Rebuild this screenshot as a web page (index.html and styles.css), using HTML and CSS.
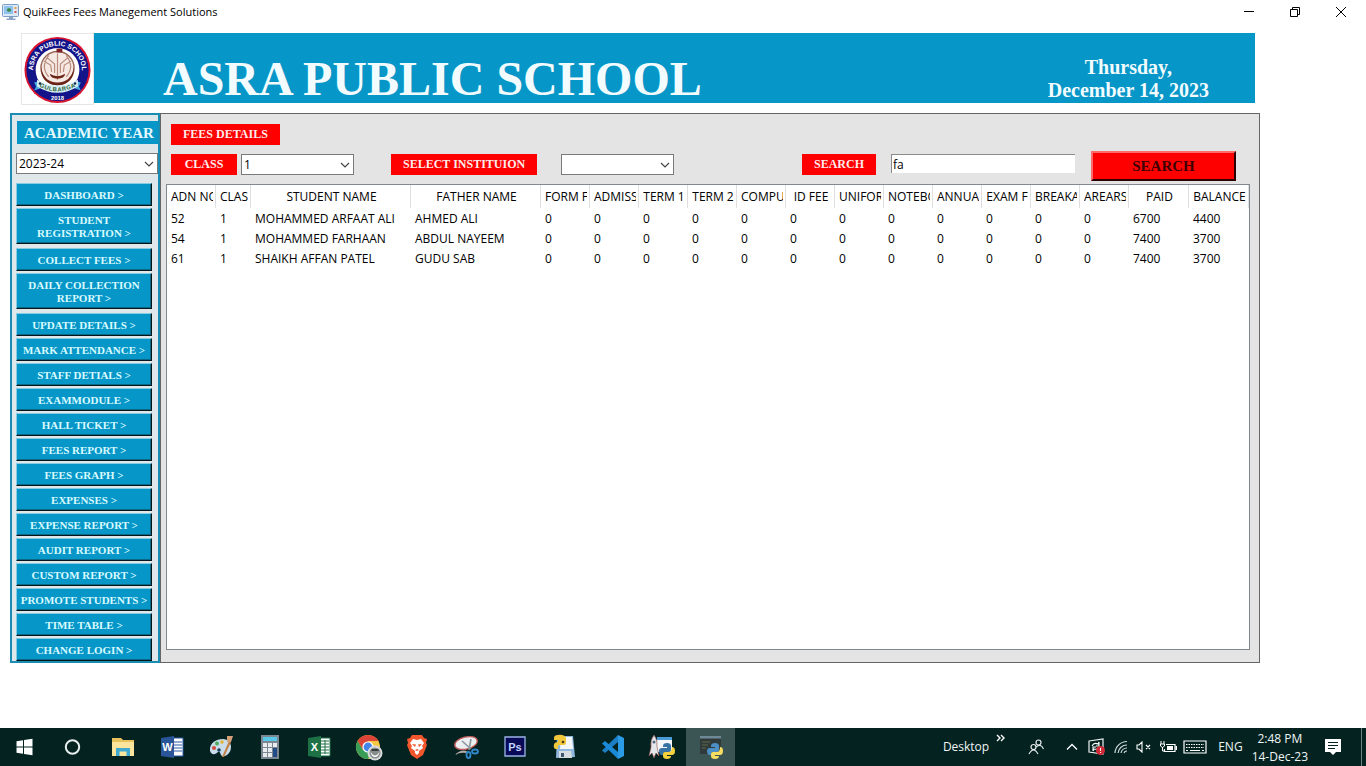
FILE: index.html
```html
<!DOCTYPE html>
<html lang="en">
<head>
<meta charset="utf-8">
<title>QuikFees Fees Manegement Solutions</title>
<link rel="stylesheet" href="styles.css">
</head>
<body>
<header class="titlebar">
  <svg class="app-icon" width="18" height="16" viewBox="0 0 18 16"><rect x=".5" y=".5" width="16" height="12" rx="1" fill="#dceaf8" stroke="#7b9cc4"/><rect x="2" y="2" width="9" height="8" fill="#8fc3ee"/><path d="M5 5l2-1 2 1v2l-2 1-2-1z" fill="#3f8b4c"/><path d="M12.500 3h2v2h-2z" fill="#e99a3c"/><path d="M12.500 7h2v2h-2z" fill="#d9534f"/><path d="M7 13h4v1.500H7zM4.500 14.500h9V16h-9z" fill="#8aa5c8"/></svg>
  <span class="title">QuikFees Fees Manegement Solutions</span>
  <div class="window-controls">
    <button aria-label="Minimize"><svg width="12" height="12" viewBox="0 0 12 12"><path d="M1 5.500h10" stroke="#000"/></svg></button>
    <button aria-label="Restore"><svg width="12" height="12" viewBox="0 0 12 12" fill="none" stroke="#000"><path d="M1.500 3.500h7v7h-7z"/><path d="M3.500 3.500v-2h7v7h-2"/></svg></button>
    <button aria-label="Close"><svg width="12" height="12" viewBox="0 0 12 12"><path d="M1 1l10 10M11 1L1 11" stroke="#000"/></svg></button>
  </div>
</header>

<div class="school">
  <svg class="crest" viewBox="0 0 72 72" role="img" aria-label="School crest">
    <defs>
      <path id="arc-name" d="M11.500 42A25 25 0 1 1 60.500 42"/>
      <path id="arc-city" d="M17 48Q36 60 55 48"/>
    </defs>
    <circle cx="36" cy="37" r="34" fill="#d9142f"/>
    <circle cx="36" cy="37" r="32" fill="#14148a"/>
    <circle cx="36" cy="37" r="22.500" fill="#fff"/>
    <circle cx="36" cy="35" r="17" fill="#f6e9e3" stroke="#9b6a5c" stroke-width="1.500"/>
    <path d="M36 20v27M27 22q-9 12 0 22M45 22q9 12 0 22M22 28l7 4 1 7M50 28l-7 4-1 7M25 24l8 7v9M47 24l-8 7v9" fill="none" stroke="#b98c7e" stroke-width="1.200"/>
    <path d="M19 34q3 16 17 16t17-16q0 18-17 19-17-1-17-19z" fill="#6b2418"/>
    <path d="M28 41q8 5 16 0-1 5-8 5t-8-5z" fill="#6b2418"/>
    <path d="M35 15h6v4h-6z" fill="#7d1f24"/>
    <path d="M12 50l6-2v8l-6 2 2-4zM60 50l-6-2v8l6 2-2-4z" fill="#4aa9dd"/>
    <path d="M15 47Q36 59 57 47v7Q36 67 15 54z" fill="#d6f0f5"/>
    <circle cx="18" cy="51" r="1.300" fill="#124"/><circle cx="54" cy="51" r="1.300" fill="#124"/>
    <text class="crest-name"><textPath href="#arc-name" startOffset="50%" text-anchor="middle">ASRA PUBLIC SCHOOL</textPath></text>
    <text class="crest-city" dy="5"><textPath href="#arc-city" startOffset="50%" text-anchor="middle">GULBARGA</textPath></text>
    <text class="crest-year" x="36" y="67.500" text-anchor="middle">2018</text>
  </svg>
  <div class="banner">
    <h1>ASRA PUBLIC SCHOOL</h1>
    <p class="date">Thursday,<br>December 14, 2023</p>
  </div>
</div>

<div class="workspace">
  <nav class="sidebar">
    <label class="year-label" for="year">ACADEMIC YEAR</label>
    <div class="combo year-combo"><select id="year"><option>2023-24</option></select><svg class="chevron" viewBox="0 0 10 6"><path d="M1 1l4 4 4-4"/></svg></div>
    <div class="menu">
      <button>DASHBOARD &gt;</button>
      <button class="tall">STUDENT<br>REGISTRATION &gt;</button>
      <button>COLLECT FEES &gt;</button>
      <button class="tall">DAILY COLLECTION<br>REPORT &gt;</button>
      <button>UPDATE DETAILS &gt;</button>
      <button>MARK ATTENDANCE &gt;</button>
      <button>STAFF DETIALS &gt;</button>
      <button>EXAMMODULE &gt;</button>
      <button>HALL TICKET &gt;</button>
      <button>FEES REPORT &gt;</button>
      <button>FEES GRAPH &gt;</button>
      <button>EXPENSES &gt;</button>
      <button>EXPENSE REPORT &gt;</button>
      <button>AUDIT REPORT &gt;</button>
      <button>CUSTOM REPORT &gt;</button>
      <button>PROMOTE STUDENTS &gt;</button>
      <button>TIME TABLE &gt;</button>
      <button>CHANGE LOGIN &gt;</button>
    </div>
  </nav>

  <main class="panel">
    <h2 class="tag">FEES DETAILS</h2>
    <form class="filters">
      <div class="field class-field"><label class="tag" for="class">CLASS</label>
        <div class="combo"><select id="class"><option>1</option></select><svg class="chevron" viewBox="0 0 10 6"><path d="M1 1l4 4 4-4"/></svg></div></div>
      <div class="field institution-field"><label class="tag" for="institution">SELECT INSTITUION</label>
        <div class="combo"><select id="institution"><option></option></select><svg class="chevron" viewBox="0 0 10 6"><path d="M1 1l4 4 4-4"/></svg></div></div>
      <div class="field search-field"><label class="tag" for="query">SEARCH</label>
        <input id="query" type="text" value="fa"></div>
      <button class="search" type="button">SEARCH</button>
    </form>
    <div class="grid">
      <table>
        <colgroup><col class="w49"><col class="w35"><col class="w160"><col class="w130"><col class="w49" span="12"><col class="w60" span="2"></colgroup>
        <thead><tr><th><span>ADN NO</span></th><th><span>CLAS</span></th><th><span>STUDENT NAME</span></th><th><span>FATHER NAME</span></th><th><span>FORM F</span></th><th><span>ADMISS</span></th><th><span>TERM 1</span></th><th><span>TERM 2</span></th><th><span>COMPU</span></th><th><span>ID FEE</span></th><th><span>UNIFOR</span></th><th><span>NOTEBO</span></th><th><span>ANNUA</span></th><th><span>EXAM F</span></th><th><span>BREAKA</span></th><th><span>AREARS</span></th><th><span>PAID</span></th><th><span>BALANCE</span></th></tr></thead>
        <tbody>
          <tr><td>52</td><td>1</td><td>MOHAMMED ARFAAT ALI</td><td>AHMED ALI</td><td>0</td><td>0</td><td>0</td><td>0</td><td>0</td><td>0</td><td>0</td><td>0</td><td>0</td><td>0</td><td>0</td><td>0</td><td>6700</td><td>4400</td></tr>
          <tr><td>54</td><td>1</td><td>MOHAMMED FARHAAN</td><td>ABDUL NAYEEM</td><td>0</td><td>0</td><td>0</td><td>0</td><td>0</td><td>0</td><td>0</td><td>0</td><td>0</td><td>0</td><td>0</td><td>0</td><td>7400</td><td>3700</td></tr>
          <tr><td>61</td><td>1</td><td>SHAIKH AFFAN PATEL</td><td>GUDU SAB</td><td>0</td><td>0</td><td>0</td><td>0</td><td>0</td><td>0</td><td>0</td><td>0</td><td>0</td><td>0</td><td>0</td><td>0</td><td>7400</td><td>3700</td></tr>
        </tbody>
      </table>
    </div>
  </main>
</div>

<footer class="taskbar">
  <div class="apps">
    <button aria-label="Start"><svg viewBox="0 0 24 24"><path d="M3.500 6.200l6.500-1v6.300H3.500zM11 5l8.500-1.200v7.700H11zM3.500 12.500H10v6.300l-6.500-1zM11 12.500h8.500v7.700L11 19z" fill="#fff"/></svg></button>
    <button aria-label="Cortana"><svg viewBox="0 0 24 24"><circle cx="10.500" cy="12" r="6.700" fill="none" stroke="#e8eeee" stroke-width="2"/></svg></button>
    <button aria-label="File Explorer"><svg viewBox="0 0 24 24"><path d="M1 3h9l2 2h11v16H1z" fill="#e8c25a"/><path d="M1 7h22v14H1z" fill="#fbe49c"/><path d="M5 21v-8h14v8h-3.500v-4.500h-7V21z" fill="#3fa9d0"/></svg></button>
    <button aria-label="Word"><svg viewBox="0 0 24 24"><path d="M12 3h11v18H12z" fill="#fff" stroke="#2b5aa8"/><path d="M14 7h8M14 10h8M14 13h8M14 16h8" stroke="#2b5aa8"/><path d="M1 3l13-2v22L1 21z" fill="#2a5699"/><text x="7.500" y="16" class="glyph">W</text></svg></button>
    <button aria-label="Paint"><svg viewBox="0 0 24 24"><path d="M1 16C0 8 7 4 14 4c8 0 10 9 6 14-3 4-7 4-8 2s-1-4-3-3c-2 2-6 4-8-1z" fill="#c9dcea"/><circle cx="5" cy="13" r="2" fill="#d54b3c"/><circle cx="8" cy="8.500" r="2" fill="#4eab58"/><circle cx="13" cy="7" r="1.800" fill="#e2b634"/><circle cx="10" cy="15" r="1.800" fill="#17405a"/><path d="M13 22L20 6l2 1-7 15z" fill="#c47e3e"/><path d="M18 1l6 0-2 6-4 0z" fill="#d3a07a"/></svg></button>
    <button aria-label="Calculator"><svg viewBox="0 0 24 24"><path d="M3 0h18v24H3z" fill="#7c8791"/><path d="M5 2h14v4H5z" fill="#59c8e8"/><path d="M5 8h4v4H5zM10 8h4v4h-4zM15 8h4v4h-4zM5 13h4v4H5zM10 13h4v4h-4zM5 18h4v4H5zM10 18h4v4h-4z" fill="#e8ecef"/><path d="M15 13h4v9h-4z" fill="#234c86"/></svg></button>
    <button aria-label="Excel"><svg viewBox="0 0 24 24"><path d="M12 3h11v18H12z" fill="#fff" stroke="#1e7145"/><path d="M14 6h8M14 9h8M14 12h8M14 15h8M14 18h8M18 5v14" stroke="#1e7145"/><path d="M1 3l13-2v22L1 21z" fill="#1e7145"/><text x="7.500" y="16" class="glyph">X</text></svg></button>
    <button aria-label="Chrome"><svg viewBox="0 0 24 24"><circle cx="12" cy="12" r="12" fill="#f6c945"/><path d="M1.600 6A12 12 0 0 1 22.400 6H12l-5 9z" fill="#dc4437"/><path d="M1.600 6A12 12 0 0 0 12 24l5-9H7z" fill="#3a9d57"/><circle cx="12" cy="12" r="5.600" fill="#fff"/><circle cx="12" cy="12" r="4.400" fill="#4284e8"/><circle cx="19" cy="18" r="7.500" fill="#d9dcdb"/><circle cx="19" cy="18" r="5.500" fill="#878c8c"/><path d="M14.500 17q4.500 7 9 0-1 5-4.500 5t-4.500-5z" fill="#fff"/><path d="M15.500 15h7" stroke="#222" stroke-width="1.500"/></svg></button>
    <button aria-label="Brave"><svg viewBox="0 0 24 24"><path d="M7 0h10l2 3 3 1-1 4 1 2-4 10-6 4-6-4-4-10 1-2-1-4 3-1z" fill="#f2562c"/><path d="M8 4l4 1 4-1 3 4-2 3 1 2-4 3v2l-2 2-2-2v-2l-4-3 1-2-2-3z" fill="#fff"/><path d="M7 9l4 .500L10 12zM17 9l-4 .500L14 12zM10 15l2-1 2 1-2 1z" fill="#f2562c"/></svg></button>
    <button aria-label="Snipping Tool"><svg viewBox="0 0 24 24"><ellipse cx="12" cy="8" rx="11.500" ry="6" transform="rotate(-14 12 8)" fill="#eceff1" stroke="#c45b5b" stroke-width="1.300"/><path d="M8 6l9 8M17 4l-2 11" stroke="#8b969d" stroke-width="1.600"/><path d="M1 20q5-6 12-4l-1 2q-6-1-11 2z" fill="#b9a8a8"/><g fill="none" stroke="#3188cc" stroke-width="1.800"><ellipse cx="14.500" cy="20" rx="2" ry="3"/><ellipse cx="21" cy="16.500" rx="3" ry="2"/></g></svg></button>
    <button aria-label="Photoshop"><svg viewBox="0 0 24 24"><path d="M2 2h20v19H2z" fill="#080a58" stroke="#9cb4e8" stroke-width="1.300"/><text x="12" y="16" class="glyph ps">Ps</text></svg></button>
    <button aria-label="Python editor"><svg viewBox="0 0 24 24"><path d="M5 1h16l2 21-19 1z" fill="#8fb8dc"/><path d="M9 2h11l1 12H8z" fill="#f4f6f7"/><path d="M7 16h12l1 7H7z" fill="#d8dde1"/><path d="M9 18h3v4H9z" fill="#3f5870"/><path d="M2 3q0-3 4-3 6-1 8 3v5q0 2-3 2H7q-1 0-1 4H3q-2-2-1-5 1-2 4-2V5H2z" fill="#f2c93c"/><circle cx="11" cy="7" r="1.300" fill="#49371a"/></svg></button>
    <button aria-label="Visual Studio Code"><svg viewBox="0 0 24 24"><path d="M17 0v7L4 18l-3-2.500z" fill="#1c7fc6"/><path d="M17 24v-7L4 6 1 8.500z" fill="#1b8ad6"/><path d="M17 0l6 3v18l-6 3z" fill="#2a9be4"/></svg></button>
    <button aria-label="Python launcher"><svg viewBox="0 0 24 24"><path d="M7 3h15v14H7z" fill="#f3f5f6"/><path d="M7 2h15v3H7z" fill="#4b9bd8"/><g transform="translate(9 8)"><path d="M4 3q0-3 4-3t4 3v4q0 2-2 2H6q-2 0-2 3H2q-2-1-2-4 0-3 3-3h5V4H4z" fill="#3872a5"/><path d="M12 13q0 3-4 3t-4-3v-2q0-2 2-2h4q3 0 3-5 3 0 3 4t-3 4H8v1z" fill="#f4d13d"/></g><path d="M4 0q-4 5-3 12l-2 9 3-3 2 5 2-5 3 3-2-9q1-7-3-12z" fill="#e5e8ea" stroke="#8b4a44" stroke-width=".6"/><circle cx="4" cy="7" r="1.500" fill="#516b82"/></svg></button>
    <button class="active" aria-label="Python"><svg viewBox="0 0 24 24"><path d="M1 1h21v18H1z" fill="#303a3b"/><path d="M1 1h21v2.500H1z" fill="#6f8a96"/><path d="M3 7h8M3 10h6M3 13h4" stroke="#5c6a45"/><g transform="translate(8 8)"><path d="M4 3q0-3 4-3t4 3v4q0 2-2 2H6q-2 0-2 3H2q-2-1-2-4 0-3 3-3h5V4H4z" fill="#4b8fc6"/><path d="M12 13q0 3-4 3t-4-3v-2q0-2 2-2h4q3 0 3-5 3 0 3 4t-3 4H8v1z" fill="#f7dc62"/></g></svg></button>
  </div>
  <div class="tray">
    <span>Desktop</span>
    <svg class="more" width="10" height="8" viewBox="0 0 10 8"><path d="M1 1l3 3-3 3M5 1l3 3-3 3" fill="none" stroke="#fff" stroke-width="1.400"/></svg>
    <svg class="people" width="16" height="16" viewBox="0 0 16 16" fill="none" stroke="#e8eeee" stroke-width="1.200"><circle cx="10.500" cy="3.500" r="2.500"/><path d="M8 8q5-4 7.500 2"/><circle cx="5.500" cy="8" r="2.500"/><path d="M1 15q4.500-8 9 0"/></svg>
    <svg class="up" width="12" height="8" viewBox="0 0 12 8"><path d="M1 6.500l5-5 5 5" fill="none" stroke="#fff" stroke-width="1.300"/></svg>
    <svg class="update" width="18" height="18" viewBox="0 0 18 18"><path d="M1 3l14-2v15L1 14z" fill="none" stroke="#eef2f2" stroke-width="1.200"/><path d="M4 8q2-4 6-2l1-2v4H8M12 8q-1 4-6 3l-1 2V9h3" fill="none" stroke="#fff" stroke-width="1.100"/><circle cx="12.500" cy="12.500" r="4.500" fill="#d22b38"/><path d="M12.500 10v3M12.500 14v1" stroke="#fff"/></svg>
    <svg class="wifi" width="14" height="14" viewBox="0 0 14 14" fill="none" stroke="#cfdada" stroke-width="1.200"><path d="M1 13A12 12 0 0 1 13 1.500M4 13A9 9 0 0 1 13 5M7 13A6 6 0 0 1 13 8M10 13A3 3 0 0 1 13 11"/></svg>
    <svg class="volume" width="16" height="12" viewBox="0 0 16 12" fill="none" stroke="#fff" stroke-width="1.100"><path d="M1 4h2l3-3v10L3 8H1zM10 4l4 4M14 4l-4 4"/></svg>
    <svg class="battery" width="17" height="12" viewBox="0 0 17 12"><path d="M6 3.500h9v7H4.500V8" fill="none" stroke="#fff" stroke-width="1.200"/><path d="M7 5h6v4H7zM15.500 5H17v4h-1.500z" fill="#fff"/><path d="M1 0v3M4 0v3M.500 3h4v2l-2 1.500-2-1.500zM2.500 6v4h2" fill="none" stroke="#fff"/></svg>
    <svg class="keyboard" width="24" height="14" viewBox="0 0 24 14"><path d="M1 1h22v12H1z" fill="none" stroke="#fff" stroke-width="1.200"/><path d="M3 4.500h18M3 7.500h18" stroke="#fff" stroke-dasharray="1.500 1"/><path d="M3 10.500h2M7 10.500h10M19 10.500h2" stroke="#fff"/></svg>
    <span class="lang">ENG</span>
    <time class="clock">2:48 PM<br>14-Dec-23</time>
    <svg class="notice" width="16" height="16" viewBox="0 0 16 16"><path d="M0 0h16v13h-5l-3 3-3-3H0z" fill="#fff"/><path d="M3 3.500h10M3 6.500h10M3 9.500h7" stroke="#032220"/></svg>
    <span class="show-desktop"></span>
  </div>
</footer>
</body>
</html>
```

FILE: styles.css
```css
* { box-sizing: border-box; }
body {
  margin: 0;
  min-height: 100vh;
  display: flex;
  flex-direction: column;
  background: #fff;
  color: #000;
  font: 12px/16px "Open Sans", "Noto Sans", sans-serif;
}
button, select, input { font: inherit; color: inherit; margin: 0; padding: 0; border-radius: 0; }
svg { display: block; flex: none; }

/* Window title bar */
.titlebar { display: flex; align-items: center; height: 24px; padding: 0 12px 0 2px; }
.title { font-size: 11px; }
.app-icon { margin-right: 3px; }
.window-controls { display: flex; gap: 20px; margin-left: auto; }
.window-controls button { display: grid; place-items: center; width: 26px; height: 20px; border: 0; background: none; }

/* School header */
.school { display: flex; align-items: flex-start; margin: 9px 111px 0 21px; }
.crest { width: 73px; height: 72px; background: #fff; border: 1px solid #e6e6e6; }
.crest-name, .crest-year, .crest-city { font-family: "Liberation Sans", sans-serif; font-weight: bold; fill: #fff; }
.crest-name { font-size: 7px; }
.crest-year { font-size: 6px; }
.crest-city { font-size: 6px; fill: #2a5a30; }
.banner {
  flex: 1;
  display: flex;
  justify-content: space-between;
  height: 70px;
  padding: 0 46px 0 69px;
  background: #0796c8;
  color: #f2fcff;
  font-family: "Liberation Serif", serif;
  font-weight: bold;
}
.banner h1 { margin: 18px 0 0; font-size: 48px; line-height: 56px; }
.date { margin: 23px 0 0; font-size: 20px; line-height: 23px; text-align: center; }

/* Sidebar */
.workspace { display: flex; margin: 8px 106px 0 10px; }
.sidebar {
  flex: 0 0 150px;
  border: 2px solid #1b8db3;
  background: #dfe7eb;
  padding: 6px 0 0;
  overflow: hidden;
  font-family: "Liberation Serif", serif;
  font-weight: bold;
}
.year-label {
  display: block;
  margin-left: 5px;
  padding: 1px 0 0 7px;
  background: #0796c8;
  color: #e4faff;
  font-size: 15px;
  line-height: 22px;
  white-space: nowrap;
}
.combo { position: relative; width: 113px; height: 21px; }
.combo select {
  display: block;
  width: 100%;
  height: 100%;
  padding-left: 2px;
  border: 1px solid #7a7a7a;
  background: #fff;
  appearance: none;
  font: 12px/16px "Open Sans", "Noto Sans", sans-serif;
}
.chevron { position: absolute; right: 4px; top: 8px; width: 10px; height: 6px; fill: none; stroke: #444; stroke-width: 1.2; pointer-events: none; }
.year-combo { width: 142px; margin: 9px 0 9px 4px; }
.menu { display: flex; flex-direction: column; gap: 2px; width: 136px; margin-left: 4px; }
.menu button {
  min-height: 23px;
  padding-top: 1px;
  border: 1px solid;
  border-color: #86cde4 #06171c #06171c #86cde4;
  box-shadow: inset -1px -1px #0a6886;
  background: #0796c8;
  color: #d8fbff;
  font-size: 11px;
  line-height: 13px;
  white-space: nowrap;
}
.menu .tall { min-height: 36px; margin-bottom: 2px; }

/* Fees panel */
.panel {
  flex: 1;
  min-width: 0;
  display: flex;
  flex-direction: column;
  padding: 10px 9px 12px 5px;
  border: 1px solid #666;
  background: #e4e4e4;
}
.tag {
  align-self: flex-start;
  min-width: 66px;
  margin: 0;
  padding: 0 12px;
  background: #fe0000;
  color: #ffeceb;
  font: bold 12px/21px "Liberation Serif", serif;
  text-align: center;
  white-space: nowrap;
}
.panel h2 { margin-left: 5px; }
.filters { display: flex; align-items: flex-start; margin: 6px 14px 3px 5px; }
.field { display: flex; padding-top: 3px; }
.class-field { gap: 4px; margin-right: 37px; }
.institution-field { gap: 24px; }
.search-field { gap: 15px; margin-left: auto; }
.search-field input {
  width: 184px;
  height: 19px;
  padding-left: 1px;
  border: 0 solid #8c8c8c;
  border-width: 1px 0 0 1px;
  background: #fff;
}
.search {
  width: 145px;
  height: 30px;
  margin-left: 16px;
  border: 2px solid;
  border-color: #ff6a6a #2b0000 #2b0000 #ff6a6a;
  background: #fe0000;
  color: #400000;
  font: bold 15px/18px "Liberation Serif", serif;
}
.grid { flex: 1; border: 1px solid #828790; background: #fff; }
table { width: 100%; table-layout: fixed; border-collapse: separate; border-spacing: 0; }
.w35 { width: 35px; }
.w49 { width: 49px; }
.w60 { width: 60px; }
.w130 { width: 130px; }
.w160 { width: 160px; }
th { height: 23px; padding: 0 2px 0 4px; border-right: 1px solid #dfdfdf; font-weight: normal; }
th span { display: block; overflow: hidden; white-space: nowrap; }
td { height: 20px; padding: 2px 0 0 4px; white-space: nowrap; }

/* Taskbar */
.taskbar { display: flex; justify-content: space-between; height: 38px; margin-top: auto; background: #032220; color: #f0f5f5; }
.apps { display: flex; }
.apps button { display: grid; place-items: center; width: 49px; border: 0; background: none; }
.apps .active { background: #3a5553; }
.apps svg { width: 24px; height: 24px; overflow: visible; }
.glyph { fill: #fff; font: bold 11px "Liberation Sans", sans-serif; text-anchor: middle; }
.ps { fill: #c3d2ff; }
.tray { display: flex; align-items: center; }
.more { align-self: flex-start; margin: 6px 0 0 7px; }
.people { margin-left: 22px; }
.up { margin-left: 22px; }
.update { margin-left: 10px; }
.wifi { margin-left: 8px; }
.volume { margin-left: 8px; }
.battery { margin-left: 8px; }
.keyboard { margin-left: 6px; }
.lang { margin-left: 11px; }
.clock { margin-left: 9px; padding-top: 2px; line-height: 18px; text-align: center; }
.notice { margin-left: 17px; }
.show-desktop { align-self: stretch; width: 5px; margin-left: 20px; border-left: 1px solid #6d8280; }
```
